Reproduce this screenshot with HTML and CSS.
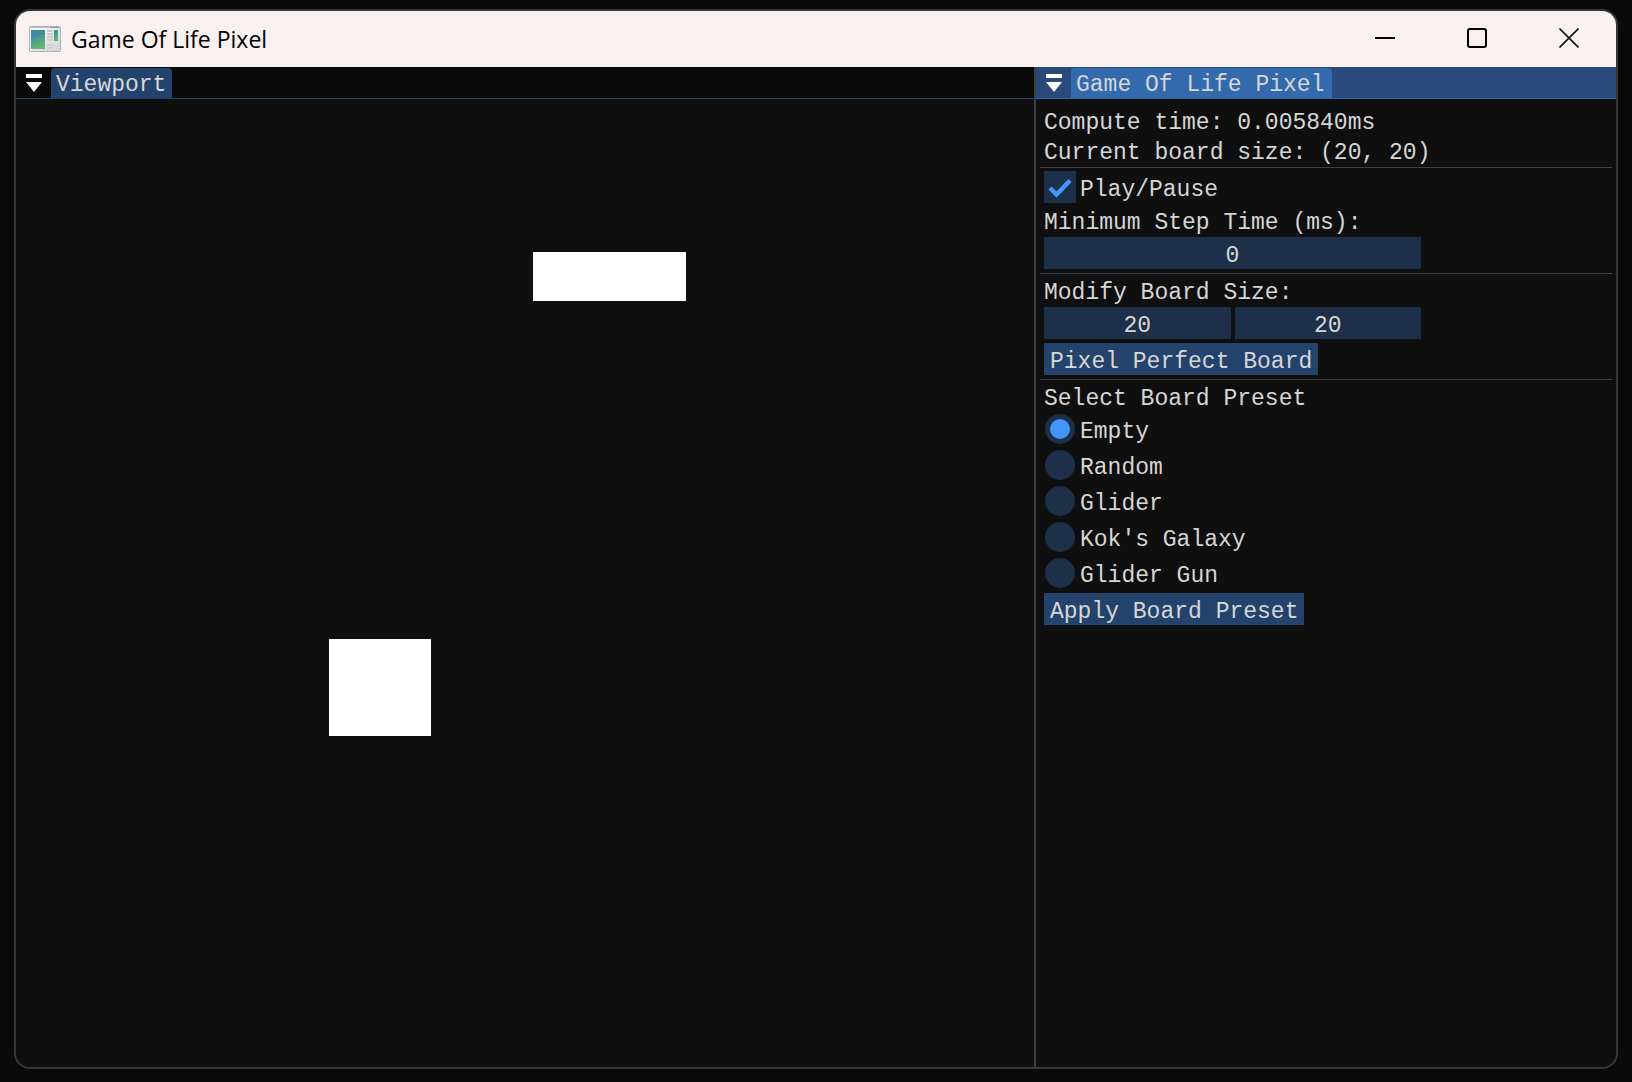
FILE: index.html
```html
<!DOCTYPE html>
<html lang="en">
<head>
<meta charset="utf-8">
<title>Game Of Life Pixel</title>
<link rel="stylesheet" href="styles.css">
</head>
<body>
<div class="window">
  <header class="titlebar">
    <svg class="app-icon" width="32" height="26" viewBox="0 0 32 26" aria-hidden="true">
      <defs>
        <linearGradient id="pane" x1="0" y1="0" x2="0.3" y2="1">
          <stop offset="0" stop-color="#4a86ac"/>
          <stop offset="0.5" stop-color="#4a9c94"/>
          <stop offset="1" stop-color="#66b56c"/>
        </linearGradient>
        <linearGradient id="frame" x1="0" y1="0" x2="1" y2="1">
          <stop offset="0" stop-color="#ffffff"/>
          <stop offset="1" stop-color="#d2d2d4"/>
        </linearGradient>
      </defs>
      <rect x="0.5" y="0.5" width="31" height="25" rx="1" fill="url(#frame)" stroke="#aab0b8"/>
      <path d="M1 1.5H31" stroke="#b7c3cf"/>
      <path d="M21 1.5H30" stroke="#8f9aa6"/>
      <rect x="2" y="4" width="14" height="19" fill="url(#pane)"/>
      <path d="M2 14Q9 8 16 9V4H2Z" fill="#3f7fae" opacity="0.4"/>
      <path d="M18 5H24M18 8H24M18 11H24M18 14H24M18 19H24M18 22H24" stroke="#cbcdd0" stroke-width="2"/>
      <rect x="25" y="4" width="4" height="11" fill="url(#pane)"/>
    </svg>
    <h1 class="title">Game Of Life Pixel</h1>
    <button class="caption" type="button" aria-label="Minimize">
      <svg width="20" height="20" viewBox="0 0 20 20"><path d="M0 10H20" stroke="#000" stroke-width="2"/></svg>
    </button>
    <button class="caption" type="button" aria-label="Maximize">
      <svg width="20" height="20" viewBox="0 0 20 20"><rect x="1" y="1" width="18" height="18" rx="2" fill="none" stroke="#000" stroke-width="2"/></svg>
    </button>
    <button class="caption" type="button" aria-label="Close">
      <svg width="20" height="20" viewBox="0 0 20 20"><path d="M0.5 0.5L19.5 19.5M19.5 0.5L0.5 19.5" stroke="#111" stroke-width="1.6"/></svg>
    </button>
  </header>

  <main class="dock">
    <section class="panel viewport">
      <div class="tabbar">
        <button class="tab-menu" type="button" aria-label="Viewport menu">
          <svg width="16" height="18" viewBox="0 0 16 18"><path d="M0 0H16V4H0ZM0 8H16L8 18Z" fill="#fff"/></svg>
        </button>
        <button class="tab" type="button">Viewport</button>
      </div>
      <div class="board-area">
        <div class="board">
          <div class="cells blinker"></div>
          <div class="cells block"></div>
        </div>
      </div>
    </section>

    <section class="panel controls focused">
      <div class="tabbar">
        <button class="tab-menu" type="button" aria-label="Panel menu">
          <svg width="16" height="18" viewBox="0 0 16 18"><path d="M0 0H16V4H0ZM0 8H16L8 18Z" fill="#fff"/></svg>
        </button>
        <button class="tab" type="button">Game Of Life Pixel</button>
      </div>
      <form class="form">
        <p class="text">Compute time: 0.005840ms</p>
        <p class="text">Current board size: (20, 20)</p>
        <hr class="separator">
        <label class="option"><input class="check" type="checkbox" checked><span>Play/Pause</span></label>
        <label class="text" for="step">Minimum Step Time (ms):</label>
        <div class="fields"><input class="field" id="step" type="text" value="0"></div>
        <hr class="separator">
        <label class="text" for="columns">Modify Board Size:</label>
        <div class="fields">
          <input class="field" id="columns" type="text" value="20">
          <input class="field" type="text" value="20" aria-label="Board rows">
        </div>
        <button class="action" type="button">Pixel Perfect Board</button>
        <hr class="separator">
        <p class="text">Select Board Preset</p>
        <label class="option"><input class="radio" type="radio" name="preset" checked><span>Empty</span></label>
        <label class="option"><input class="radio" type="radio" name="preset"><span>Random</span></label>
        <label class="option"><input class="radio" type="radio" name="preset"><span>Glider</span></label>
        <label class="option"><input class="radio" type="radio" name="preset"><span>Kok's Galaxy</span></label>
        <label class="option"><input class="radio" type="radio" name="preset"><span>Glider Gun</span></label>
        <button class="action" type="button">Apply Board Preset</button>
      </form>
    </section>
  </main>
</div>
</body>
</html>
```
FILE: styles.css
```css
* {
  box-sizing: border-box;
}

body {
  margin: 0;
  min-height: 100vh;
  display: flex;
  padding: 9px 14px 13px;
  background: #0a0a0a;
  color: #d6d6d6;
  font: 23px/26px "Liberation Mono", monospace;
}

button,
input {
  margin: 0;
  padding: 0;
  border: 0;
  border-radius: 0;
  color: inherit;
  font: inherit;
}

.window {
  flex: 1;
  display: flex;
  flex-direction: column;
  overflow: hidden;
  border: 2px solid #373737;
  border-radius: 16px;
  background: #0f0f0f;
}

/* Title bar */

.titlebar {
  display: flex;
  align-items: center;
  height: 56px;
  padding: 0 1px 0 13px;
  background: #f9f0f0;
  color: #000;
}

.title {
  flex: 1;
  margin: 0 0 0 10px;
  font: 400 23px/32px "Open Sans", "Noto Sans", sans-serif;
}

.caption {
  display: flex;
  align-items: center;
  justify-content: center;
  width: 92px;
  height: 56px;
  padding-bottom: 2px;
  background: none;
}

/* Docked panels */

.dock {
  flex: 1;
  display: flex;
}

.panel {
  display: flex;
  flex-direction: column;
}

.viewport {
  flex: 1;
}

.controls {
  width: 582px;
  border-left: 2px solid #3f3f47;
}

.tabbar {
  display: flex;
  align-items: flex-end;
  height: 32px;
  border-bottom: 1px solid #23436c;
  background: #0a0a0a;
}

.tab-menu {
  display: flex;
  width: 35px;
  height: 31px;
  padding: 7px 0 0 10px;
  background: none;
}

.tab {
  height: 30px;
  padding: 5px 6px 0 5px;
  border-radius: 4px 4px 0 0;
  background: #23436c;
  line-height: 25px;
}

.focused .tabbar {
  border-color: #3369ad;
  background: #294a7a;
}

.focused .tab {
  padding-right: 8px;
  background: #3369ad;
}

/* Board: 20 by 20 cells the size of the panel, clipped at the far edges */

.board-area {
  flex: 1;
  display: flex;
  padding: 8px 0 0 8px;
  overflow: hidden;
}

.board {
  flex: 1;
  display: grid;
  grid-template: repeat(20, 1fr) / repeat(20, 1fr);
  margin: 0 -8px -8px 0;
}

.cells {
  background: #fff;
}

.blinker {
  grid-area: 4 / 11 / 5 / 14;
}

.block {
  grid-area: 12 / 7 / 14 / 9;
}

/* Controls */

.form {
  display: flex;
  flex-direction: column;
  align-items: flex-start;
  gap: 4px;
  padding: 8px;
}

.text {
  height: 26px;
  margin: 0;
  line-height: 32px;
}

.separator {
  align-self: stretch;
  height: 1px;
  margin: 0 -4px -1px;
  border: 0;
  background: #3f3f47;
}

.option {
  display: flex;
  align-items: center;
  gap: 4px;
  height: 32px;
  line-height: 26px;
}

.option span {
  padding-top: 6px;
}

.check,
.radio {
  appearance: none;
  width: 32px;
  height: 32px;
  background: #1d2f49;
}

.check:checked {
  background: #1d2f49 url("data:image/svg+xml,%3Csvg xmlns='http://www.w3.org/2000/svg' viewBox='0 0 32 32'%3E%3Cpath d='M6 17L12.500 23.500L26 9.500' fill='none' stroke='%234296fa' stroke-width='4.400'/%3E%3C/svg%3E");
}

.radio {
  width: 30px;
  height: 30px;
  margin: 0 1px;
  border-radius: 50%;
}

.radio:checked {
  border: 5px solid #1d2f49;
  background: #4296fa;
}

.fields {
  display: flex;
  gap: 4px;
  width: 377px;
}

.field {
  flex: 1;
  min-width: 0;
  height: 32px;
  padding-top: 6px;
  background: #1d2f49;
  text-align: center;
}

.action {
  height: 32px;
  padding: 6px 6px 0;
  background: #23436c;
}
```
